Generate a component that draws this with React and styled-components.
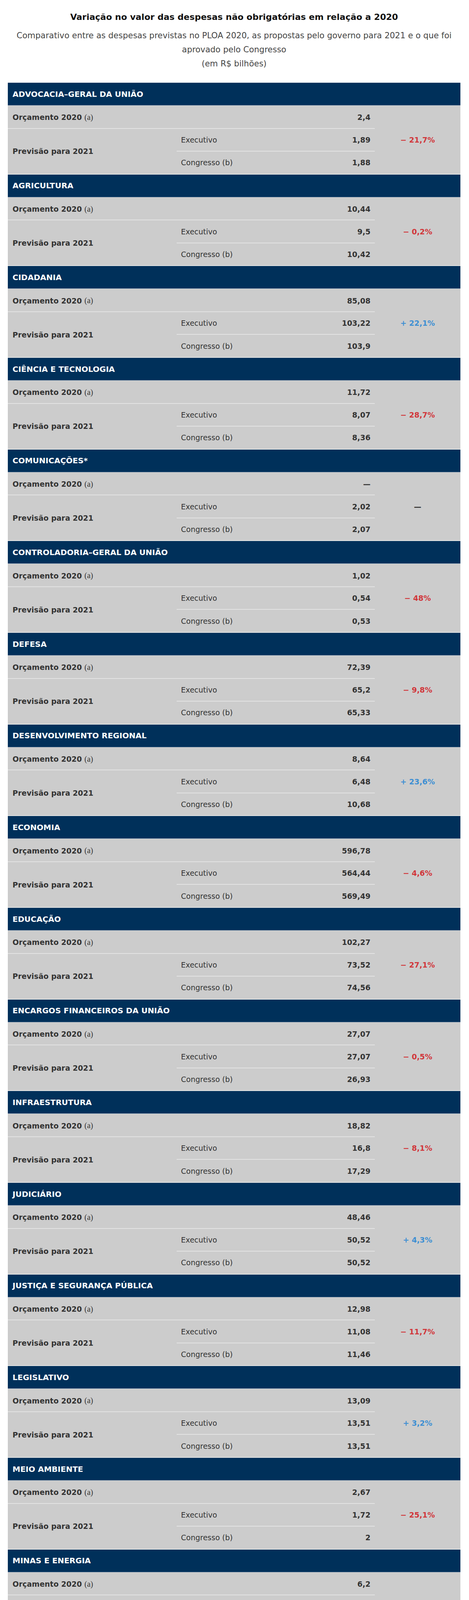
import React from "react";
import styled, { createGlobalStyle } from "styled-components";

const GlobalStyle = createGlobalStyle`
  html, body {
    margin: 0;
    padding: 0;
    background: #ffffff;
  }
  body {
    font-family: "DejaVu Sans", Verdana, sans-serif;
    color: #333333;
  }
`;

const ministries = [
  { name: "ADVOCACIA–GERAL DA UNIÃO", budget: "2,4", exec: "1,89", congress: "1,88", change: "− 21,7%", trend: "down" },
  { name: "AGRICULTURA", budget: "10,44", exec: "9,5", congress: "10,42", change: "− 0,2%", trend: "down" },
  { name: "CIDADANIA", budget: "85,08", exec: "103,22", congress: "103,9", change: "+ 22,1%", trend: "up" },
  { name: "CIÊNCIA E TECNOLOGIA", budget: "11,72", exec: "8,07", congress: "8,36", change: "− 28,7%", trend: "down" },
  { name: "COMUNICAÇÕES*", budget: "—", exec: "2,02", congress: "2,07", change: "—", trend: "none" },
  { name: "CONTROLADORIA–GERAL DA UNIÃO", budget: "1,02", exec: "0,54", congress: "0,53", change: "− 48%", trend: "down" },
  { name: "DEFESA", budget: "72,39", exec: "65,2", congress: "65,33", change: "− 9,8%", trend: "down" },
  { name: "DESENVOLVIMENTO REGIONAL", budget: "8,64", exec: "6,48", congress: "10,68", change: "+ 23,6%", trend: "up" },
  { name: "ECONOMIA", budget: "596,78", exec: "564,44", congress: "569,49", change: "− 4,6%", trend: "down" },
  { name: "EDUCAÇÃO", budget: "102,27", exec: "73,52", congress: "74,56", change: "− 27,1%", trend: "down" },
  { name: "ENCARGOS FINANCEIROS DA UNIÃO", budget: "27,07", exec: "27,07", congress: "26,93", change: "− 0,5%", trend: "down" },
  { name: "INFRAESTRUTURA", budget: "18,82", exec: "16,8", congress: "17,29", change: "− 8,1%", trend: "down" },
  { name: "JUDICIÁRIO", budget: "48,46", exec: "50,52", congress: "50,52", change: "+ 4,3%", trend: "up" },
  { name: "JUSTIÇA E SEGURANÇA PÚBLICA", budget: "12,98", exec: "11,08", congress: "11,46", change: "− 11,7%", trend: "down" },
  { name: "LEGISLATIVO", budget: "13,09", exec: "13,51", congress: "13,51", change: "+ 3,2%", trend: "up" },
  { name: "MEIO AMBIENTE", budget: "2,67", exec: "1,72", congress: "2", change: "− 25,1%", trend: "down" },
  { name: "MINAS E ENERGIA", budget: "6,2", exec: "8,91", congress: "8,94", change: "+ 44,2%", trend: "up" },
  { name: "MINISTÉRIO PÚBLICO E DEFENSORIA PÚBLICA DA UNIÃO", budget: "8,32", exec: "8,22", congress: "8,22", change: "− 1,2%", trend: "down" },
  { name: "MULHER, FAMÍLIA E DIREITOS HUMANOS", budget: "0,36", exec: "0,31", congress: "0,52", change: "+ 44,4%", trend: "up" },
  { name: "PRESIDÊNCIA DA REPÚBLICA", budget: "2,35", exec: "0,82", congress: "0,82", change: "− 65,1%", trend: "down" },
  { name: "RELAÇÕES EXTERIORES", budget: "2,38", exec: "2,01", congress: "1,97", change: "− 17,2%", trend: "down" },
  { name: "SAÚDE", budget: "129,93", exec: "134,5", congress: "136,23", change: "+ 4,8%", trend: "up" },
  { name: "TRANSFERÊNCIAS A ESTADOS, DISTRITO FEDERAL E MUNICÍPIOS", budget: "301,94", exec: "288,67", congress: "307,69", change: "+ 1,9%", trend: "up" },
  { name: "TURISMO", budget: "1,83", exec: "1,4", congress: "1,73", change: "− 5,5%", trend: "down" },
];

const trendColors = {
  down: "#d1363a",
  up: "#3d8fd3",
  none: "#333333",
};

export default function App() {
  return (
    <>
      <GlobalStyle />
      <Page>
        <Title>Variação no valor das despesas não obrigatórias em relação a 2020</Title>
        <Subtitle>
          Comparativo entre as despesas previstas no PLOA 2020, as propostas pelo governo para 2021 e o que foi aprovado pelo Congresso
          <br />
          (em R$ bilhões)
        </Subtitle>

        <Table>
          {ministries.map((m) => (
            <Section key={m.name}>
              <Header>{m.name}</Header>

              <BudgetLabel>
                Orçamento 2020&nbsp;<Mark>(a)</Mark>
              </BudgetLabel>
              <Amount $row={2} $rule $lift>
                {m.budget}
              </Amount>

              <ForecastLabel>Previsão para 2021</ForecastLabel>
              <SubLabel $row={3} $rule>
                Executivo
              </SubLabel>
              <Amount $row={3} $rule>
                {m.exec}
              </Amount>
              <Change $color={trendColors[m.trend]}>{m.change}</Change>

              <SubLabel $row={4}>Congresso (b)</SubLabel>
              <Amount $row={4}>{m.congress}</Amount>
            </Section>
          ))}
        </Table>

        <Notes>
          <p>* O ministério não existia em 2020</p>
          <p>
            Fontes: Projeto de Lei Orçamentária Anual (PLOA – PLN 28/2020) com as alterações do Congresso Nacional e
            <br />
            Consultoria de Orçamento do Senado Federal
          </p>
        </Notes>
      </Page>
    </>
  );
}

const Page = styled.div`
  width: 1158px;
  margin: 0 0 0 20px;
  padding: 31px 0 8px;
`;

const Title = styled.h1`
  margin: 0;
  font-size: 22px;
  line-height: 26px;
  font-weight: bold;
  color: #111111;
  text-align: center;
`;

const Subtitle = styled.p`
  margin: 16px 0 0;
  font-size: 21px;
  line-height: 36px;
  color: #454545;
  text-align: center;
`;

const Table = styled.div`
  margin-top: 30px;
  border-top: 1px solid #c3ccd6;
`;

const Section = styled.section`
  display: grid;
  grid-template-columns: 432px 300px 207px 1fr;
  grid-template-rows: 58px 59.7px 58.3px 56.7px;
  background: #cccccc;
  border-bottom: 2px solid #e3e3e3;
  font-size: 19px;
  color: #333333;
`;

const Header = styled.div`
  grid-column: 1 / -1;
  grid-row: 1;
  display: flex;
  align-items: center;
  padding: 0 12px;
  background: #00305a;
  border-bottom: 1px solid #5b7898;
  color: #ffffff;
  font-size: 20px;
  font-weight: bold;
`;

const BudgetLabel = styled.div`
  grid-column: 1 / 3;
  grid-row: 2;
  display: flex;
  align-items: center;
  padding: 3px 12px 0;
  border-bottom: 2px solid #e3e3e3;
  font-weight: bold;
`;

const Mark = styled.span`
  font-family: "Liberation Serif", "Times New Roman", serif;
  font-size: 20px;
  font-weight: normal;
`;

const ForecastLabel = styled.div`
  grid-column: 1;
  grid-row: 3 / 5;
  display: flex;
  align-items: center;
  padding: 0 12px;
  font-weight: bold;
`;

const SubLabel = styled.div`
  grid-column: 2;
  grid-row: ${(p) => p.$row};
  display: flex;
  align-items: center;
  padding: 0 11px;
  border-bottom: ${(p) => (p.$rule ? "2px solid #e3e3e3" : "none")};
`;

const Amount = styled.div`
  grid-column: 3;
  grid-row: ${(p) => p.$row};
  display: flex;
  align-items: center;
  justify-content: flex-end;
  padding: ${(p) => (p.$lift ? "3px 11px 0" : "0 11px")};
  border-bottom: ${(p) => (p.$rule ? "2px solid #e3e3e3" : "none")};
  font-weight: bold;
`;

const Change = styled.div`
  grid-column: 4;
  grid-row: 3;
  display: flex;
  align-items: center;
  justify-content: center;
  padding-bottom: 2px;
  color: ${(p) => p.$color};
  font-weight: bold;
`;

const Notes = styled.div`
  margin-top: 14px;
  padding-right: 11px;
  text-align: right;
  font-size: 16px;
  line-height: 27px;
  color: #333333;

  p {
    margin: 0;
  }
`;
